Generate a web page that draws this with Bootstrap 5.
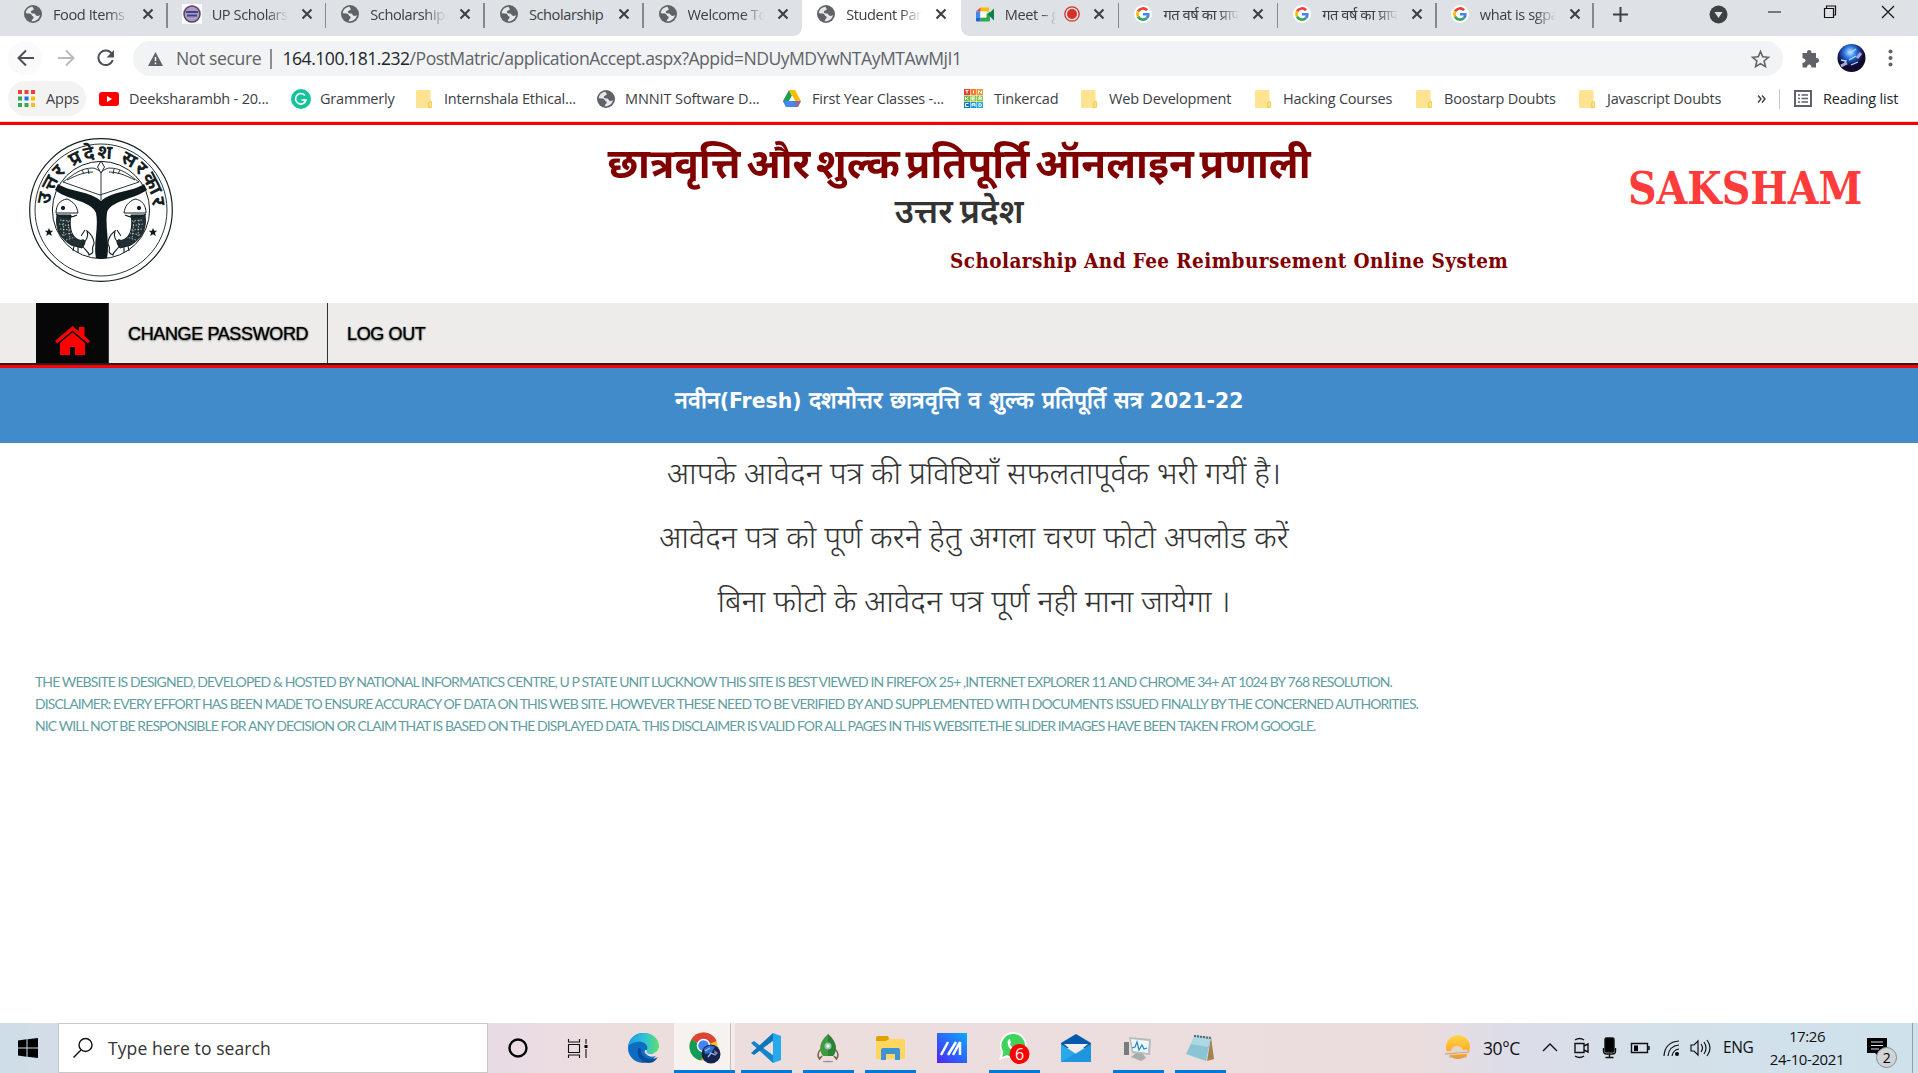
<!DOCTYPE html>
<html lang="hi">
<head>
<meta charset="utf-8">
<title>Student Panel</title>
<link href="https://cdn.jsdelivr.net/npm/bootstrap@5.3.0/dist/css/bootstrap.min.css" rel="stylesheet">
<style>
:root{--ui:"Open Sans","Noto Sans",sans-serif}
body{width:1918px;height:1073px;overflow:hidden;background:#fff;font-family:var(--ui);color:#3c4043}
svg{display:block;flex:none;overflow:visible}
.tabstrip{height:36px;background:#dee1e6;padding-left:9px}
.btab{width:158.65px;height:36px;padding-left:15px;position:relative;font-size:14.6px;letter-spacing:-.42px;flex:none}
.btab>svg:first-child{width:18px;height:18px;margin-top:-8px}
.btab .cap{width:76px;margin-left:11px;white-space:nowrap;overflow:hidden;line-height:28px;height:28px;margin-top:-9px;-webkit-mask-image:linear-gradient(90deg,#000 72%,transparent)}
.btab .cap.whole{-webkit-mask-image:none;width:78px;margin-right:-2px}
.btab .cls{width:12px;height:12px;margin-left:13px;margin-top:-8px}
.btab .sep{width:1.5px;height:25px;background:#868a90;margin-left:auto;margin-top:-6px}
.btab.on{background:#fff}
.btab.on:before,.btab.on:after{content:"";position:absolute;bottom:0;width:8px;height:8px}
.btab.on:before{left:-8px;background:radial-gradient(circle at 0 0,#dee1e6 7.5px,#fff 8px)}
.btab.on:after{right:-8px;background:radial-gradient(circle at 100% 0,#dee1e6 7.5px,#fff 8px)}
.winctl{height:30px;flex:1}
.toolbar{height:45px;padding-top:5px}
.omni{width:1650px;height:35px;border-radius:18px;background:#f1f3f4;font-size:17.6px;color:#5f6368;letter-spacing:-.5px;padding:0 13px 0 15px;margin-left:9px}
.bm{height:40px;padding-left:8px;font-size:14.5px;letter-spacing:-.2px;white-space:nowrap}
.bm>div{height:35px;flex:none;display:flex;align-items:center}
.bm svg{margin-right:11px}
.bm .apps{width:78px;border-radius:18px;background:#f3f3f4;padding-left:10px;margin-right:13px}
.redline{border-top:1px solid #d6dbe0;border-bottom:3px solid red;height:4px}
.masthead{height:178px}
.masthead .emb{padding:13px 0 0 29px;width:579px}
.titles{width:760px;padding-top:8px}
.titles h1{margin:0;font:700 42px/58px "Noto Sans",sans-serif;color:maroon;white-space:nowrap;text-align:center;word-spacing:-5px;transform:scaleX(.963)}
.titles h2{margin:-3px 0 0;font:600 34px/44px "Noto Sans",sans-serif;color:#333;text-align:center;white-space:nowrap;word-spacing:-2px}
.slab{font-family:"Roboto Slab","DejaVu Serif",serif;font-stretch:condensed;font-weight:700;white-space:nowrap}
.sub{font-size:20.5px;color:maroon;margin:9px 0 0 371px;line-height:40px;letter-spacing:.42px}
.sak{font-size:44px;color:#ff3c3c;padding:29px 0 0 289px;line-height:70px}
.menu{height:62px;background:#eeeceb;border-bottom:2px solid #222;padding-left:36px;font:18px "Liberation Sans",sans-serif;color:#000;text-shadow:0 1px 2px #888,0 0 1px #000}
.menu>div{height:60px;border-right:1px solid #333;display:flex;align-items:center;letter-spacing:-.37px;white-space:nowrap;padding-top:2px}
.banner{height:78px;border-top:3px solid red;background:#428bca;color:#fff;font:700 20.4px/66px "DejaVu Sans",sans-serif;text-align:center;white-space:nowrap}
.banner b{font-size:23px;line-height:1}
.msg{color:#333;font:300 30.9px/64px "Noto Sans",sans-serif;padding-left:30px;margin-top:-3px;text-align:center}
.foot{margin:39px 0 0 35px;font:14px/22px Lato,sans-serif;letter-spacing:-.91px;color:#5f9ea0;white-space:nowrap}
.task{height:50px;margin-top:auto;background:linear-gradient(90deg,#cedde7 0,#d4dde7 60px,#e9dbe5 490px,#ecdedd 620px,#ebdddd 1420px,#dddde8 1500px,#d4e0ea 1650px,#cee2eb);color:#111}
.srch{width:430px;height:50px;background:#fff;border:1px solid #c6c8ca;padding-left:14px;font-size:17.5px;letter-spacing:.1px;color:#333}
.tk{width:62px;height:50px;display:flex;align-items:center;justify-content:center;position:relative;flex:none}
.tk.run:after{content:"";position:absolute;left:6px;width:51px;bottom:0;height:3px;background:#0078d7}
.tk.act{background:linear-gradient(90deg,#f7f1f0 56px,#c9b9b8 56px,#c9b9b8 57px,#f4ecea 57px)}
.tk.act:after{left:0;width:61px}
.tray{flex:1;font-size:16.5px;letter-spacing:-.4px}
</style>
</head>
<body class="d-flex flex-column">
<svg width="0" height="0" class="position-absolute">
<defs>
<symbol id="globe" viewBox="0 0 18 18"><circle cx="9" cy="9" r="9" fill="#5f6368"/><path d="M8.500 1.800C4.800 2 2 5 1.800 8.300l3.700.2c1.500.2 2.200 1.200 2.700 2.500 1 .2 1.800.6 1.300 2-.2 1.200-1.700 1-1.700 2.500v.7c3.600.5 7.600-2 8.200-6.200-.9.600-2 1.200-3.300.8-1.300-.5-1.200-2-2.700-2.200-1.500-.1-3-.1-3.200-1.600C6.700 5.500 8.500 5.600 9.500 5c.8-.7-.5-1.800-1-3.200" fill="#e6e8eb"/></symbol>
<symbol id="xx" viewBox="0 0 12 12"><path d="m1.500 1.500 9 9m0-9-9 9" stroke="#3c4043" stroke-width="2.100"/></symbol>
<symbol id="goog" viewBox="0 0 20 20"><circle cx="10" cy="10" r="10" fill="#fff"/><g fill="none" stroke-width="3"><path d="M14.500 5.800A6.200 6.200 0 0 0 4.500 7.200" stroke="#ea4335"/><path d="M4.500 7.200a6.200 6.200 0 0 0 0 5.600" stroke="#fbbc05"/><path d="M4.500 12.800a6.200 6.200 0 0 0 9.800 1.700" stroke="#34a853"/><path d="M14.300 14.500c1.500-1.400 1.800-3 1.600-4.200H10" stroke="#4285f4"/></g></symbol>
<symbol id="fold" viewBox="0 0 16 18"><path d="M1.500 0h12q1 0 1 1v10.500q1.500 0 1.500 1.500v3.500q0 1.500-1.500 1.500h-13Q0 18 0 16.500v-15Q0 0 1.500 0" fill="#fee391"/><path d="M12.700 17.500v-4q0-2 1.800-2t1.300 2v2.500q0 1.500-1.500 1.500z" fill="#fde186" stroke="#ecc94c"/></symbol>
</defs></svg>

<div class="tabstrip d-flex">
<div class="btab d-flex align-items-center"><svg><use href="#globe"/></svg><span class="cap">Food Items</span><svg class="cls"><use href="#xx"/></svg><i class="sep"></i></div>
<div class="btab d-flex align-items-center"><svg viewBox="0 0 18 18"><path fill="#fafafa" d="M-1-1h20v20H-1z"/><circle cx="9" cy="9" r="8" fill="#a99bc4" stroke="#53415f" stroke-width="1.500"/><path d="M3 7h12M4 10.500h10" stroke="#3e4388" stroke-width="2"/></svg><span class="cap">UP Scholarship</span><svg class="cls"><use href="#xx"/></svg><i class="sep"></i></div>
<div class="btab d-flex align-items-center"><svg><use href="#globe"/></svg><span class="cap">Scholarship</span><svg class="cls"><use href="#xx"/></svg><i class="sep"></i></div>
<div class="btab d-flex align-items-center"><svg><use href="#globe"/></svg><span class="cap whole">Scholarship</span><svg class="cls"><use href="#xx"/></svg><i class="sep"></i></div>
<div class="btab d-flex align-items-center"><svg><use href="#globe"/></svg><span class="cap">Welcome To</span><svg class="cls"><use href="#xx"/></svg></div>
<div class="btab on d-flex align-items-center"><svg><use href="#globe"/></svg><span class="cap">Student Panel</span><svg class="cls"><use href="#xx"/></svg></div>
<div class="btab d-flex align-items-center"><svg viewBox="0 0 18 18"><path d="M4.500 2.500H13v4H4.500z" fill="#fbbc04"/><path d="M4.500 2.500v4H0z" fill="#ea4335"/><path d="M0 6.500h4v6H0z" fill="#4285f4"/><path d="M0 12.500h4.500v4H1q-1 0-1-1z" fill="#1967d2"/><path d="M4.500 12.500H10v-3l4-3v8.500q0 1.500-1 1.500H4.500z" fill="#34a853"/><path d="m12 9.500 6-6v12z" fill="#0b8043"/><path d="M4.500 6.500h6v6h-6z" fill="#fff"/></svg><span class="cap" style="width:51px">Meet – g</span><svg style="width:16px;height:18px;margin:-8px 0 0 8px" viewBox="0 0 16 18"><circle cx="8" cy="9" r="7.200" fill="none" stroke="#d93025" stroke-width="1.300"/><circle cx="8" cy="9" r="5" fill="#d93025"/></svg><svg class="cls" style="margin-left:13px"><use href="#xx"/></svg><i class="sep"></i></div>
<div class="btab d-flex align-items-center"><svg><use href="#goog"/></svg><span class="cap">गत वर्ष का प्राप्त</span><svg class="cls"><use href="#xx"/></svg><i class="sep"></i></div>
<div class="btab d-flex align-items-center"><svg><use href="#goog"/></svg><span class="cap">गत वर्ष का प्राप्त</span><svg class="cls"><use href="#xx"/></svg><i class="sep"></i></div>
<div class="btab d-flex align-items-center" style="width:157px;padding-left:14px"><svg><use href="#goog"/></svg><span class="cap">what is sgpa</span><svg class="cls"><use href="#xx"/></svg><i class="sep"></i></div>
<div class="winctl"><svg width="316" height="30" viewBox="1595 0 316 30"><path d="M1614 14.500h15M1621.500 7v15" stroke="#3c4043" stroke-width="2"/><circle cx="1719.500" cy="14.500" r="9" fill="#3c4043"/><path d="M1715.500 12h8l-4 6z" fill="#dee1e6"/><path d="M1769 12h13M1825.500 8.500h9v9h-9zM1827.500 8V6h9v9h-2M1883 6l12 12m0-12-12 12" fill="none" stroke="#111" stroke-width="1.200"/></svg></div>
</div>

<div class="toolbar d-flex">
<svg width="124" height="35" viewBox="0 41 124 35"><circle cx="25" cy="58.500" r="17" fill="#fafafa"/><g fill="none" stroke-width="2"><path d="M34 58H19m7-7.500L18.500 58l7.500 7.500" stroke="#4c5054"/><path d="M58 58h15m-7-7.500 7.500 7.500-7.500 7.500" stroke="#b8babd"/><path d="M112 54a7.300 7.300 0 1 0 .7 6" stroke="#4c5054"/></g><path d="M114 50v7.500h-7.500z" fill="#4c5054"/></svg>
<div class="omni d-flex align-items-center"><svg width="15" height="14" viewBox="0 0 15 14"><path d="m7.500 0 7.500 14H0z" fill="#5f6368"/><path d="M7.500 5v4m0 1.500v1.700" stroke="#fff" stroke-width="1.500"/></svg><span style="margin-left:13px;width:94px;letter-spacing:-.4px">Not secure</span><i style="width:1.500px;height:20px;background:#8a8d91;margin-right:11px"></i><span><span class="text-dark">164.100.181.232</span>/PostMatric/applicationAccept.aspx?Appid=NDUyMDYwNTAyMTAwMjI1</span><svg class="ms-auto" width="19" height="18" viewBox="0 0 19 18"><path d="m9.500 1.500 2.200 5.300 5.700.5-4.300 3.700 1.300 5.600-4.900-3-4.900 3L5.900 11 1.600 7.300l5.700-.5z" fill="none" stroke="#5f6368" stroke-width="1.600"/></svg></div>
<svg width="135" height="35" viewBox="1783 41 135 35"><path d="M1803 53h4c-.5-4 5-4 4.500 0h4.500v5c4-.5 4 5.500 0 5v4.500h-4.500c0-4-4.500-4-4.500 0h-4.500v-4.800c4 0 4-4.500 0-4.500V53z" fill="#5f6368"/><defs><radialGradient id="av" cx=".45" cy=".3"><stop offset="0" stop-color="#cbe9ff"/><stop offset=".4" stop-color="#2f7fe6"/><stop offset=".75" stop-color="#1a2a80"/><stop offset="1" stop-color="#120a2c"/></radialGradient></defs><circle cx="1851.500" cy="58" r="14" fill="url(#av)"/><path d="m1841 60 5 1-3 5m6-6 7-4m-5 9 7-3m-8-9 6-4" stroke="#9ee3ff" stroke-width="1.300" fill="none"/><path d="m1841 66 6-3m10-5 4-5" stroke="#a9a8d8" stroke-width="3"/><g fill="#5f6368"><circle cx="1890.500" cy="51.500" r="2"/><circle cx="1890.500" cy="58" r="2"/><circle cx="1890.500" cy="64.500" r="2"/></g></svg>
</div>

<div class="bm d-flex">
<div class="apps"><svg width="17" height="17" viewBox="0 0 17 17"><path d="M0 0h4v4H0zm6.500 0h4v4h-4zM13 0h4v4h-4z" fill="#ea4335"/><path d="M0 6.500h4v4H0zM0 13h4v4H0zm6.500 0h4v4h-4z" fill="#34a853"/><path d="M6.500 6.500h4v4h-4z" fill="#1a73e8"/><path d="M13 6.500h4v4h-4zm0 6.500h4v4h-4z" fill="#fbbc04"/></svg>Apps</div>
<div style="width:192px"><svg width="20" height="14" viewBox="0 0 20 14" style="margin-right:10px"><rect width="20" height="14" rx="3" fill="red"/><path d="m8 4 5 3-5 3z" fill="#fff"/></svg>Deeksharambh - 20...</div>
<div style="width:125px"><svg width="20" height="20" viewBox="0 0 20 20" style="margin-right:9px"><circle cx="10" cy="10" r="10" fill="#15c39a"/><path d="M14 6.500A5.300 5.300 0 1 0 15 11h-4.500m2.500 3 2-3" fill="none" stroke="#fff" stroke-width="1.700"/></svg>Grammerly</div>
<div style="width:181px"><svg width="16" height="18" style="margin-right:12px"><use href="#fold"/></svg>Internshala Ethical...</div>
<div style="width:186px;letter-spacing:-.1px"><svg width="18" height="18" style="margin-right:10px"><use href="#globe"/></svg>MNNIT Software D...</div>
<div style="width:181px"><svg width="18" height="17" viewBox="0 0 18 17"><path d="M6 0 0 11l3 6 6-11z" fill="#1e9e50"/><path d="M6 0h6l6 11h-6z" fill="#fbbc04"/><path d="M0 11h18l-3 6H3z" fill="#4285f4"/><path d="m9 5.500 3 5.500H6z" fill="#fff"/><path d="M15 17h-3l-.5-6H18z" fill="#ea4335" opacity=".4"/></svg>First Year Classes -...</div>
<div style="width:117px"><svg width="19" height="19" viewBox="0 0 19 19"><path d="M0 0h6v6H0z" fill="#e83d2c"/><path d="M6.500 0h6v6h-6z" fill="#f77b2e"/><path d="M13 0h6v6h-6z" fill="#fa922f"/><path d="M0 6.500h6v6H0z" fill="#64b947"/><path d="M6.500 6.500h6v6h-6zm6.500 0h6v6h-6z" fill="#8bc63f"/><path d="M0 13h6v6H0z" fill="#1879be"/><path d="M6.500 13h6v6h-6z" fill="#1a94d1"/><path d="M13 13h6v6h-6z" fill="#29b0e0"/><path d="M1.500 1.500h3M3 1.500v3m6.500-3v3m5 0v-3l3 3v-3M1.500 8v3m3-3-2 1.500 2 1.500M11 8H8v3h3M8 9.500h2.500M15 11V8h2.500v1.500H15m1 0 1.500 1.500M4.500 14.500h-3v3h3m3.500 0v-3h3v3M8 16h3m4-1.500v3h1.500l1-1.500-1-1.500z" stroke="#fff" fill="none"/></svg>Tinkercad</div>
<div style="width:174px"><svg width="16" height="18" style="margin-right:12px"><use href="#fold"/></svg>Web Development</div>
<div style="width:161px"><svg width="16" height="18" style="margin-right:12px"><use href="#fold"/></svg>Hacking Courses</div>
<div style="width:163px"><svg width="16" height="18" style="margin-right:12px"><use href="#fold"/></svg>Boostarp Doubts</div>
<div style="width:178px"><svg width="16" height="18" style="margin-right:12px"><use href="#fold"/></svg>Javascript Doubts</div>
<div style="width:22px"><svg width="10" height="8" viewBox="0 0 10 8"><path d="m1 .5 3 3.500-3 3.500m4-7L8 4 5 7.500" fill="none" stroke="#3c4043" stroke-width="1.400"/></svg></div>
<div style="border-left:1px solid #c6c8cb;height:20px;margin-top:8px;width:15px"></div>
<div class="text-dark"><svg width="18" height="17" viewBox="0 0 18 17"><rect x="1" y="1" width="16" height="15" fill="none" stroke="#5f6368" stroke-width="2"/><path d="M4 5h2m1.500 0H14M4 8.500h2m1.500 0H14M4 12h2m1.500 0H14" stroke="#5f6368" stroke-width="1.500"/></svg>Reading list</div>
</div>
<div class="redline"></div>

<header class="masthead d-flex">
<div class="emb"><svg width="144" height="144" viewBox="-72 -72 144 144" fill="none" stroke="#142022"><circle r="71.300" stroke-width="1.200"/><circle r="66" stroke-width=".9"/><circle r="48.600" stroke-width="1"/>
<path id="arc" d="M-51.500 0A51.500 51.500 0 0 1 51.500 0" stroke="none"/>
<text font-family="Noto Sans,sans-serif" font-weight="700" font-size="19.500" fill="#142022" stroke="none"><textPath href="#arc" startOffset="5" textLength="153">उत्तर प्रदेश सरकार</textPath></text>
<g fill="#0f1a1c" stroke="none"><path d="M-43-26c12 8 32 7 43 17C11-19 31-18 43-26l3 6C34-11 8-9 6 3c-2 14 3 30 0 45-4 1-8 1-11 0C-8 34-2 17-5 3-9-9-36-11-46-20z"/><path d="m-52 18 1.200 2.800h3l-2.300 2 .9 3.200-2.800-1.700-2.800 1.700.9-3.200-2.300-2h3zM52 18l1.200 2.800h3l-2.300 2 .9 3.200-2.800-1.700-2.800 1.700.9-3.200-2.300-2h3z"/></g>
<path d="M-38-28-1-15l39-13M0-48v38M-38-28C-28-35-21-42-8-42c3 0 5 3 8 3s5-3 8-3c13 0 20 7 30 14M-34-30C-24-35-16-38-8-38m42 8C24-35 16-38 8-38M-19-40l2 4m4-5 1 5m31-4-2 4m-4-5-1 5" stroke-width=".9"/><path d="m0-49 3.500 6L0-37l-3.500-6z" fill="#fff"/>
<g id="fish"><path d="M-45 3c0-8 4-13 11-14 7 3 10 7 11 14z" fill="#fff"/><path d="M-44 5c-2 14 3 23 14 30l11 3c2-3 4-5 2-8-8-1-14-8-13-25z" fill="#223033"/><path d="M-31 8c-1 10 2 18 9 21l6-9M-45 4c5 4 16 4 21 1M-19 34c4-2 7-8 5-13 7 5 8 13 6 15-2 5 3 6-4 9 0-4-6-5-7-11zm-8 2-1 5m5-5 0 7" stroke-width="1.100"/><path d="M-30 8c7-1 6-1 6 3-1 9 2 14 7 17l-3 2c-9-2-11-11-10-22z" fill="#fff" stroke="none"/><path d="m-41 10 10 1m-11 3 11 2m-10 3 11 1m-9 5 10-2m-6 7 9-3m-12-17 1 16m4-15 2 18" stroke="#e8ecec" stroke-width=".7" stroke-dasharray="1.500 1.500"/><circle cx="-38" cy="-2" r="1.700" fill="#142022"/></g>
<use href="#fish" transform="scale(-1 1)"/></svg></div>
<div class="titles"><h1>छात्रवृत्ति और शुल्क प्रतिपूर्ति ऑनलाइन प्रणाली</h1><h2>उत्तर प्रदेश</h2><div class="slab sub">Scholarship And Fee Reimbursement Online System</div></div>
<div class="slab sak">SAKSHAM</div>
</header>
<nav class="menu d-flex">
<div style="width:73px;background:#070707;padding:14px 0 0 19px"><svg width="35" height="29" viewBox="0 0 35 29"><path d="m0 15 17.500-15L24 5.500V1h5.500v9L35 15l-2 2.500L17.500 4.500 2 17.500z" fill="red"/><path d="M17.500 6.500 30 17v12H20v-8h-5v8H5V17z" fill="red"/></svg></div>
<div style="width:219px;padding-left:19px"><span>CHANGE PASSWORD</span></div>
<div class="border-0" style="padding-left:19px">LOG OUT</div>
</nav>
<div class="banner"><b>नवीन</b>(Fresh) <b>दशमोत्तर छात्रवृत्ति व शुल्क प्रतिपूर्ति सत्र</b> 2021-22</div>
<main class="msg"><div>आपके आवेदन पत्र की प्रविष्टियाँ सफलतापूर्वक भरी गयीं है।</div><div>आवेदन पत्र को पूर्ण करने हेतु अगला चरण फोटो अपलोड करें</div><div>बिना फोटो के आवेदन पत्र पूर्ण नही माना जायेगा ।</div></main>
<footer class="foot"><div>THE WEBSITE IS DESIGNED, DEVELOPED &amp; HOSTED BY NATIONAL INFORMATICS CENTRE, U P STATE UNIT LUCKNOW THIS SITE IS BEST VIEWED IN FIREFOX 25+ ,INTERNET EXPLORER 11 AND CHROME 34+ AT 1024 BY 768 RESOLUTION.</div><div>DISCLAIMER: EVERY EFFORT HAS BEEN MADE TO ENSURE ACCURACY OF DATA ON THIS WEB SITE. HOWEVER THESE NEED TO BE VERIFIED BY AND SUPPLEMENTED WITH DOCUMENTS ISSUED FINALLY BY THE CONCERNED AUTHORITIES.</div><div>NIC WILL NOT BE RESPONSIBLE FOR ANY DECISION OR CLAIM THAT IS BASED ON THE DISPLAYED DATA. THIS DISCLAIMER IS VALID FOR ALL PAGES IN THIS WEBSITE.THE SLIDER IMAGES HAVE BEEN TAKEN FROM GOOGLE.</div></footer>

<div class="task d-flex">
<div style="width:58px;padding:15px 0 0 18px"><svg width="20" height="20" viewBox="0 0 20 20"><path d="m0 2.500 8.500-1.200v8.200H0zM9.500 1.200 20 0v9.500H9.500zM0 10.500h8.500v8.300L0 17.500zm9.500 0H20V20L9.500 18.800z" fill="#000"/></svg></div>
<div class="srch d-flex align-items-center"><svg width="20" height="20" viewBox="0 0 20 20"><circle cx="12.500" cy="7" r="6.500" fill="none" stroke="#111" stroke-width="1.400"/><path d="M8 12 .5 19.500" stroke="#111" stroke-width="1.500"/></svg><span style="margin-left:15px">Type here to search</span></div>
<div class="tk" style="width:60px"><svg width="20" height="20"><circle cx="10" cy="10" r="8.500" fill="none" stroke="#000" stroke-width="2.400"/></svg></div>
<div class="tk" style="width:64px;padding-right:4px"><svg width="20" height="19" viewBox="0 0 20 19"><path d="M.5 5.500h11v8H.5zM.5 0v3h11V0M.5 19v-3h11v3M18 0v5m0 5v9" fill="none" stroke="#111" stroke-width="1.100"/><path d="M16.500 6h3v3h-3z"/></svg></div>
<div class="tk"><svg width="31" height="30" viewBox="0 0 31 30"><defs><linearGradient id="ed" x2="1"><stop stop-color="#1b9de2"/><stop offset=".55" stop-color="#2fc3d5"/><stop offset="1" stop-color="#5fe06a"/></linearGradient></defs><circle cx="15" cy="15" r="15" fill="#0d6cc4"/><path d="M0 14C1 5 8 0 16 0c9 0 15 6 15 13 0 5-4 8-9 8-4 0-4-2-3-4 2-6-5-10-11-8-5 1-7 3-8 5" fill="url(#ed)"/><path d="M10 16c-2 6 3 14 11 14 4 0 7-3 9-6-9 5-17 0-17-7 0-2-2-3-3-1" fill="#0b4a94"/><path d="M18 21c4 4 9 3 13 0v-6c-2 4-6 6-9 6-3 0-4-2-3-4-3 0-3 2-1 4" fill="#ecdedd"/></svg></div>
<div class="tk run act" style="width:61px;padding-left:1px"><svg width="32" height="32" viewBox="0 0 32 32"><circle cx="14.500" cy="14.500" r="14" fill="#f9c31c"/><path d="M14.500 14.500 2.400 7.500A14 14 0 0 1 27.500 9z" fill="#db4437"/><path d="M14.500 14.500 2.400 7.500a14 14 0 0 0 10 21z" fill="#0f9d58"/><circle cx="14.500" cy="13.500" r="6.800" fill="#fff"/><circle cx="14.500" cy="13.500" r="5.300" fill="#4285f4"/><circle cx="22" cy="22" r="9.500" fill="#16234f"/><path d="M15 17q5-6 11-2l-4 6-6 1z" fill="#2d6fd0"/><path d="m16 19 5-3m-2 9 3-4 4 2" stroke="#9cc4ec" stroke-width="1.300" fill="none"/><path d="m25 18 4 3-3 3z" fill="#8285b8"/></svg></div>
<div class="tk run"><svg width="30" height="30" viewBox="0 0 30 30"><path d="m0 10 3-2 20 15-1 7L1 11z" fill="#1485cf"/><path d="M0 20 22 0l1 7L3 22z" fill="#0f75bd"/><path d="m22 0 8 3v24l-8 3z" fill="#27a9f0"/></svg></div>
<div class="tk run"><svg width="22" height="29" viewBox="0 0 22 29"><path d="M4 15q-5 5-1.500 10l2.500-3m13-7q5 5 1.500 10L17 22" fill="none" stroke="#77634a" stroke-width="1.500"/><path d="M11 0c10 9 9 17 5 22H6C2 17 1 9 11 0" fill="#42993e"/><path d="M11 0c10 9 9 17 5 22h-5z" fill="#2d8036"/><circle cx="11" cy="12" r="3.500" fill="#87c9a8"/><circle cx="11" cy="12" r="1.800" fill="#e9f5e9"/><ellipse cx="11" cy="27.500" rx="5.500" ry=".8" fill="#9b928f"/></svg></div>
<div class="tk run"><svg width="29" height="25" viewBox="0 0 29 25"><path d="M0 2q0-2 2-2h10l2 3h13q2 0 2 2v18H0z" fill="#ffd75e"/><path d="M0 2q0-2 2-2h10l1 3-3 2H0z" fill="#e0a000"/><path d="M5 24V14q0-2 2-2h15q2 0 2 2v10h-5v-6h-9v6z" fill="#3e93d4"/></svg></div>
<div class="tk"><svg width="30" height="30" viewBox="0 0 30 30"><defs><linearGradient id="as" x1="0" y1="1" x2="1" y2="0"><stop stop-color="#5126ee"/><stop offset=".5" stop-color="#2a67fb"/><stop offset="1" stop-color="#0ba9fd"/></linearGradient></defs><path d="M0 0h30v30H0z" fill="url(#as)"/><path d="M4 22 11 9m0 13 8-13m-3 13 7-13v13" stroke="#fff" stroke-width="2.500" fill="none"/></svg></div>
<div class="tk run"><svg width="32" height="32" viewBox="0 0 32 32"><path d="M15 0a13.500 13.500 0 1 1-6 25.500L1 28l2.500-8A13.500 13.500 0 0 1 15 0" fill="#fff"/><path d="M15 2a11.500 11.500 0 1 1-6 21l-5 2 1.500-5A11.500 11.500 0 0 1 15 2" fill="#3ed45c"/><path d="M10 8c-2 6 4 13 10 12l1-3-4-2-1 1c-2-1-3-2-4-4l1-1-1-4z" fill="#fff"/><circle cx="21.500" cy="22" r="10" fill="red"/><text x="21.500" y="27.500" text-anchor="middle" font-family="Open Sans" font-size="16" fill="#fff">6</text></svg></div>
<div class="tk"><svg width="30" height="28" viewBox="0 0 30 28"><path d="M0 9 15 0l15 9v5H0z" fill="#0759ab"/><path d="M3 10h24L15 20z" fill="#f3eeee"/><path d="M0 10v18h30V10L15 20z" fill="#27a9ea"/><path d="m0 28 30-18v18z" fill="#147fd2" opacity=".45"/></svg></div>
<div class="tk run"><svg width="30" height="28" viewBox="0 0 30 28"><path d="M1 8h5v13H1z" fill="#777d7d"/><path d="m6 3 22 2-1 16-18-2z" fill="#b7bdbd"/><path d="m8 5 18 2-1 12-15-2z" fill="#edf7fd"/><path d="m9 14 3-1 2-5 2 8 3-5 2 4 3-1" fill="none" stroke="#2185b8" stroke-width="1.200"/><path d="m13 19 7 1 3 4-5 3-10-4z" fill="#a7acac"/></svg></div>
<div class="tk run"><svg width="28" height="28" viewBox="0 0 28 28"><path d="m25 3 3 22-7 2z" fill="#a0834f"/><path d="M9 1 25 3l-5 24L0 20z" fill="#8bc4d4"/><path d="M9 1 25 3l-3 10L5 10z" fill="#bce3ec" opacity=".7"/><path d="m8 2 17 2" stroke="#5b6569" stroke-width="2" stroke-dasharray="2 1"/></svg></div>
<div class="tray d-flex align-items-center" style="margin-left:212px">
<svg width="29" height="28" viewBox="0 0 29 28"><defs><linearGradient id="su" y2="1" x2="0"><stop stop-color="#ffd84a"/><stop offset="1" stop-color="#ff9712"/></linearGradient></defs><circle cx="15" cy="13" r="12" fill="url(#su)"/><path d="M2 19q2-3 6-2 1-5 6-5t6 4q5-1 6 2 3 2-2 2L5 21q-4 0-3-2" fill="#e8d5c8"/><path d="m2 20 24-2m-20 5h18" stroke="#c0a494" stroke-width="1"/></svg>
<span style="width:57px;margin-left:11px;font-size:17.500px">30°C</span>
<svg width="178" height="30" viewBox="1540 0 178 30" fill="none" stroke="#111" stroke-width="1.400"><path d="m1543 18 7-7 7 7M1575 10.500h9v9h-9zM1584 13l4-2v8l-4-2M1575 7q4.500-3 9 0M1575 23q4.500 3 9 0"/><rect x="1605" y="5" width="9" height="14" rx="1.500" fill="#000"/><path d="M1603.500 15v3q0 3 3 3h6q3 0 3-3v-3m-6 6v3.500m-4 0h8M1631.500 10.500h16v9h-16zM1649 13v4"/><path d="M1634 12.500h4v5.500h-4z" fill="#000" stroke="none"/><path d="M1664 23q1-14 15-15M1668 23q1-10 11-11M1672 23q1-6 7-7" stroke-width="1.200"/><circle cx="1677" cy="21" r="2" fill="#000" stroke="none"/><path d="M1691 12h3l4-4v14l-4-4h-3zM1701 11q3 4 0 8M1704 9q4 6 0 12M1707 7q6 8 0 16" stroke-width="1.200"/></svg>
<span style="width:46px;font-size:15.500px;margin-left:5px">ENG</span>
<div class="text-center" style="width:76px;font-size:15px;line-height:23px;margin-top:-1px">17:26<br>24-10-2021</div>
<svg class="ms-auto" width="51" height="50" viewBox="0 0 51 50" style="margin-right:0"><path d="M0 15h20v15h-8v4l-4-4H0z" fill="#000"/><path d="M4 19h12M4 22.500h12M4 26h8" stroke="#dde" stroke-width="1.200"/><circle cx="19.500" cy="34.500" r="10" fill="#d0d4d6" stroke="#888"/><text x="19.500" y="39.500" text-anchor="middle" font-family="Open Sans" font-size="14" fill="#000">2</text><path d="M45.500 0v50" stroke="#8fa3b0"/></svg>
</div>
</div>
<script src="https://cdn.jsdelivr.net/npm/bootstrap@5.3.0/dist/js/bootstrap.bundle.min.js"></script>
</body>
</html>
